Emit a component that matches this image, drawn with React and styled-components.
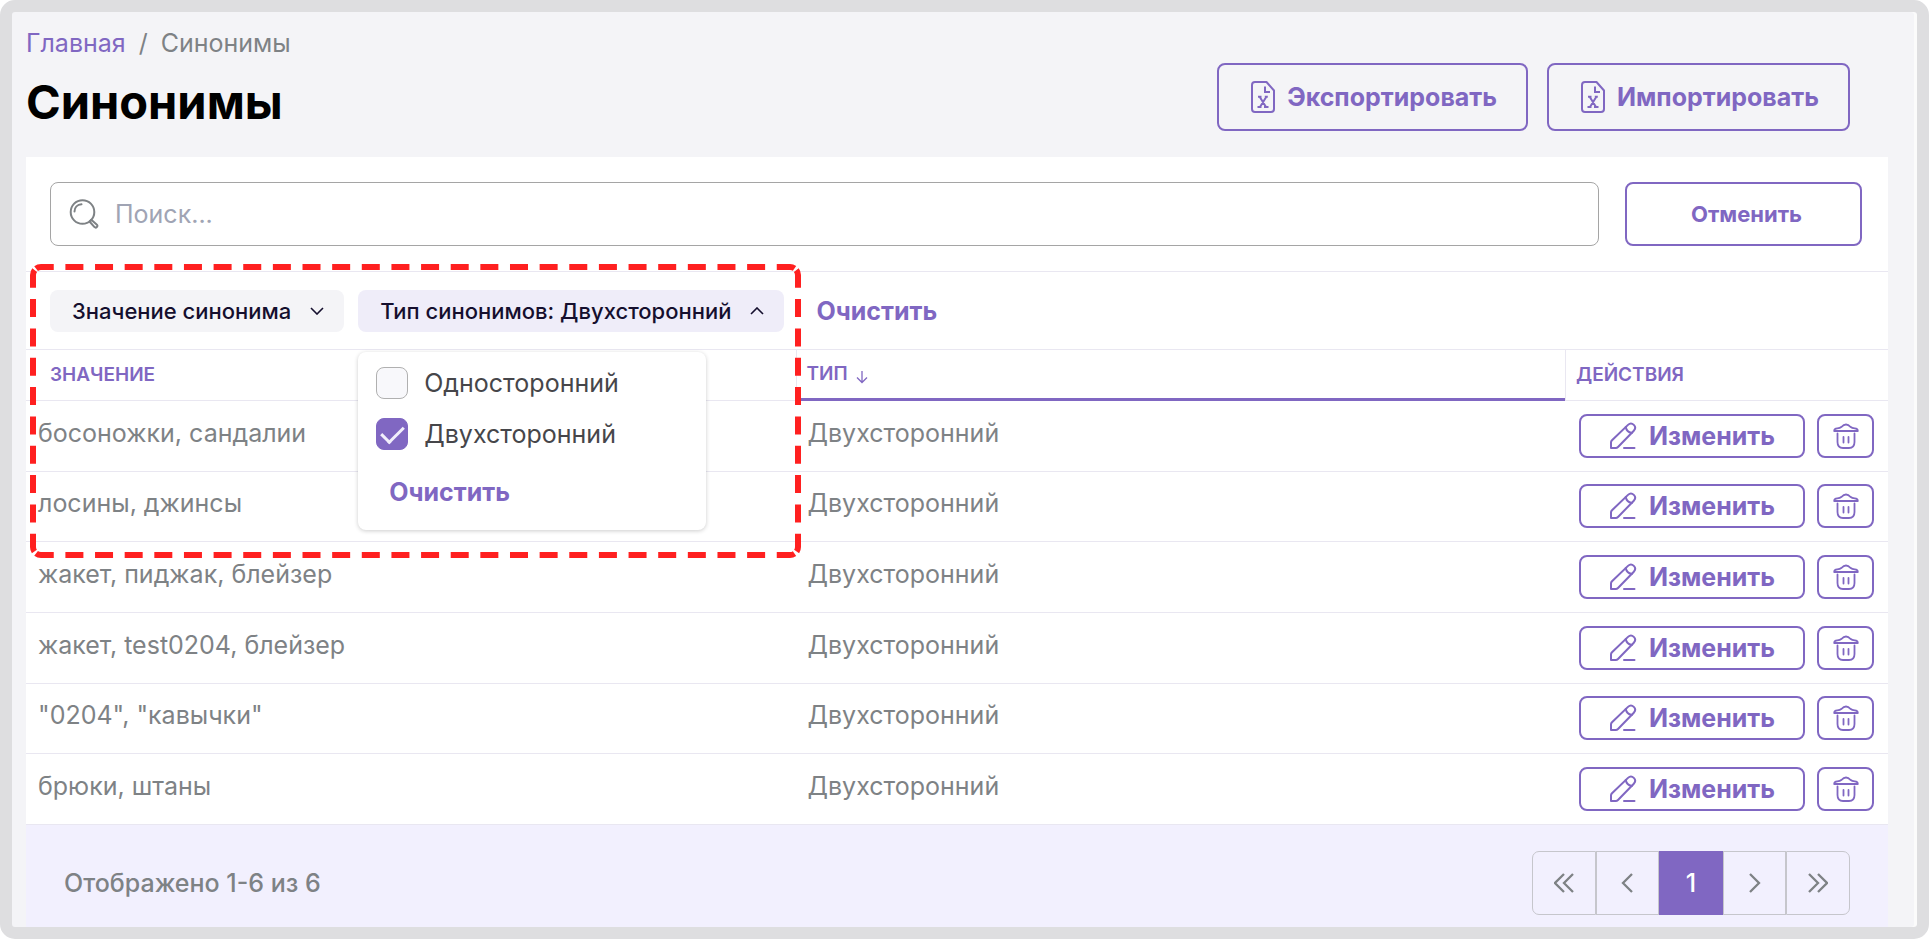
import React, { useState } from 'react';
import styled, { createGlobalStyle } from 'styled-components';

const purple = '#8067c2';
const line = '#e9e7f1';

const rows = [
  'босоножки, сандалии',
  'лосины, джинсы',
  'жакет, пиджак, блейзер',
  'жакет, test0204, блейзер',
  '"0204", "кавычки"',
  'брюки, штаны',
];

const ExcelIcon = () => (
  <svg width="24" height="32" viewBox="0 0 24 32" fill="none" stroke="currentColor" strokeWidth="2">
    <path d="M15.500 1H4a3 3 0 0 0-3 3v24a3 3 0 0 0 3 3h16a3 3 0 0 0 3-3V9.500z" strokeLinejoin="round" />
    <path d="M14 5.500V11h5" />
    <path d="M8.500 15.500l6.500 10.500M15.500 15.500L9 26M7 15.800h3.500M13.800 15.800h3M6.500 26h4M13 26h4.500" />
  </svg>
);

const PencilIcon = () => (
  <svg width="28" height="28" viewBox="0 0 28 28" fill="none" stroke="currentColor" strokeWidth="2" strokeLinejoin="round" strokeLinecap="round">
    <path d="M2 26v-5.500c0-1 .4-1.600 1-2.200L19 2.900c1.800-1.700 4.200-1.600 5.800 0s1.700 4 0 5.800L9 25c-.6.600-1.300 1-2.200 1z" />
    <path d="M16.800 5c.5 3.300 2.400 5.300 6 6M15 26h10.500" />
  </svg>
);

const TrashIcon = () => (
  <svg width="26" height="26" viewBox="0 0 26 26" fill="none" stroke="currentColor" strokeWidth="1.800" strokeLinejoin="round" strokeLinecap="round">
    <path d="M1.200 8c0-1.900 1.400-2.500 3-2.600 2-.1 3.300-.6 4.500-1.600C9.900 2.300 11 1.500 13 1.500s3.100.8 4.300 2.300c1.200 1 2.500 1.500 4.500 1.600 1.600.1 3 .7 3 2.600z" />
    <path d="M4.500 10.500V19c0 4 2 6 5.500 6h6c3.500 0 5.500-2 5.500-6v-8.500M10.500 14v5.500M15.500 14v5.500" />
  </svg>
);

const SearchIcon = () => (
  <svg width="30" height="30" viewBox="0 0 30 30" fill="none" stroke="currentColor" strokeWidth="2" strokeLinecap="round">
    <circle cx="13.500" cy="13" r="11.800" />
    <path d="M5.500 12.500c0-4 3-6.800 7-7.200" />
    <path d="M20.500 22.500l1.800-1.800 5.600 5a1.700 1.700 0 0 1-2.400 2.400z" strokeLinejoin="round" />
  </svg>
);

const Chevron = ({ up }) => (
  <svg width="14" height="8" viewBox="0 0 14 8" fill="none" stroke="currentColor" strokeWidth="1.600">
    <path d={up ? 'M1 7l6-6 6 6' : 'M1 1l6 6 6-6'} />
  </svg>
);

const SortIcon = () => (
  <svg width="12" height="14" viewBox="0 0 12 14" fill="none" stroke="currentColor" strokeWidth="1.300">
    <path d="M6 1v11.500M1 7.500l5 5 5-5" />
  </svg>
);

const PageIcon = ({ d, width = 12 }) => (
  <svg width={width} height="20" viewBox={`0 0 ${width} 20`} fill="none" stroke="currentColor" strokeWidth="2.300">
    <path d={d} />
  </svg>
);

const App = () => {
  const [search, setSearch] = useState('');
  const [types, setTypes] = useState({ one: false, two: true });

  const toggle = (key) => setTypes({ ...types, [key]: !types[key] });
  const clear = () => setTypes({ one: false, two: false });

  return (
    <Frame>
      <GlobalStyle />
      <Header>
        <div>
          <Breadcrumbs>
            <a href="#main">Главная</a>
            <span>/</span>
            <span>Синонимы</span>
          </Breadcrumbs>
          <Title>Синонимы</Title>
        </div>
        <HeaderActions>
          <HeaderButton type="button"><ExcelIcon />Экспортировать</HeaderButton>
          <HeaderButton type="button"><ExcelIcon />Импортировать</HeaderButton>
        </HeaderActions>
      </Header>

      <Panel>
        <SearchRow>
          <SearchBox>
            <SearchIcon />
            <input aria-label="Поиск" placeholder="Поиск..." value={search} onChange={(e) => setSearch(e.target.value)} />
          </SearchBox>
          <CancelButton type="button" onClick={() => setSearch('')}>Отменить</CancelButton>
        </SearchRow>

        <Filters>
          <Chip type="button">Значение синонима<Chevron /></Chip>
          <FilterWrap>
            <Chip type="button" $active>Тип синонимов: Двухсторонний<Chevron up /></Chip>
            <Dropdown>
              <Option>
                <Checkbox type="checkbox" checked={types.one} onChange={() => toggle('one')} />
                Односторонний
              </Option>
              <Option>
                <Checkbox type="checkbox" checked={types.two} onChange={() => toggle('two')} />
                Двухсторонний
              </Option>
              <ClearButton type="button" onClick={clear}>Очистить</ClearButton>
            </Dropdown>
          </FilterWrap>
          <ClearButton type="button" onClick={clear}>Очистить</ClearButton>
          <Highlight width="771" height="294" viewBox="0 0 771 294" aria-hidden="true">
            <path d="M5.340 5.340A8 8 0 0 1 11 3H760A8 8 0 0 1 765.660 5.340" strokeDasharray="18 11.640" />
            <path d="M5.340 288.660A8 8 0 0 0 11 291H760A8 8 0 0 0 765.660 288.660" strokeDasharray="18 11.640" />
            <path d="M5.340 5.340A8 8 0 0 0 3 11V283A8 8 0 0 0 5.340 288.660" strokeDasharray="18 11.330" />
            <path d="M765.660 5.340A8 8 0 0 1 768 11V283A8 8 0 0 1 765.660 288.660" strokeDasharray="18 11.330" />
          </Highlight>
        </Filters>

        <Table>
          <colgroup>
            <col />
            <col />
            <ActionsCol />
          </colgroup>
          <thead>
            <tr>
              <Th $first>Значение</Th>
              <Th $sorted>Тип <SortIcon /></Th>
              <Th>Действия</Th>
            </tr>
          </thead>
          <tbody>
            {rows.map((row) => (
              <tr key={row}>
                <Td>{row}</Td>
                <Td>Двухсторонний</Td>
                <ActionsTd>
                  <Actions>
                    <EditButton type="button"><PencilIcon />Изменить</EditButton>
                    <DeleteButton type="button" aria-label="Удалить"><TrashIcon /></DeleteButton>
                  </Actions>
                </ActionsTd>
              </tr>
            ))}
          </tbody>
        </Table>

        <Footer>
          <span>Отображено 1-6 из 6</span>
          <Pagination aria-label="Страницы">
            <PageButton type="button" aria-label="Первая"><PageIcon width={20} d="M10 1l-9 9 9 9M19 1l-9 9 9 9" /></PageButton>
            <PageButton type="button" aria-label="Назад"><PageIcon d="M11 1l-9 9 9 9" /></PageButton>
            <PageButton type="button" $current>1</PageButton>
            <PageButton type="button" aria-label="Вперёд"><PageIcon d="M1 1l9 9-9 9" /></PageButton>
            <PageButton type="button" aria-label="Последняя"><PageIcon width={20} d="M1 1l9 9-9 9M10 1l9 9-9 9" /></PageButton>
          </Pagination>
        </Footer>
      </Panel>
    </Frame>
  );
};

export default App;

const GlobalStyle = createGlobalStyle`
  * {
    box-sizing: border-box;
  }
  body {
    margin: 0;
    background: #fff;
    font-family: Inter, 'Noto Sans', sans-serif;
    font-size: 25px;
    line-height: 30px;
    color: #7e8285;
  }
  button, input {
    font-family: inherit;
  }
  button {
    cursor: pointer;
    padding: 0;
  }
  svg {
    flex-shrink: 0;
  }
`

const Frame = styled.div`
  display: flex;
  flex-direction: column;
  min-height: 100vh;
  padding: 0 29px 0 14px;
  border: 12px solid #dedee0;
  border-radius: 15px;
  background: #f4f4f7;
  box-shadow: inset -3px 0 #fbfbfb;
`

const Header = styled.header`
  display: flex;
  justify-content: space-between;
  align-items: flex-end;
  padding: 16px 38px 26px 0;
`

const Breadcrumbs = styled.nav`
  display: flex;
  gap: 13px;

  a {
    color: ${purple};
    text-decoration: none;
  }
`

const Title = styled.h1`
  margin: 15px 0 0;
  font-size: 47px;
  line-height: 58px;
  font-weight: 700;
  color: #000;
`

const HeaderActions = styled.div`
  display: flex;
  gap: 19px;
`

const OutlineButton = styled.button`
  display: flex;
  align-items: center;
  justify-content: center;
  border: 2px solid ${purple};
  border-radius: 8px;
  background: transparent;
  color: ${purple};
  font-size: 25px;
  font-weight: 700;
`

const HeaderButton = styled(OutlineButton)`
  gap: 12px;
  height: 68px;
  padding: 0 29px 0 32px;
`

const Panel = styled.main`
  display: flex;
  flex-direction: column;
  flex: 1;
  background: #fff;
`

const SearchRow = styled.div`
  display: flex;
  gap: 26px;
  padding: 25px 26px 25px 24px;
  border-bottom: 1px solid ${line};
`

const SearchBox = styled.label`
  display: flex;
  flex: 1;
  align-items: center;
  gap: 16px;
  height: 64px;
  padding: 0 18px;
  border: 1px solid #a5a5a5;
  border-radius: 8px;

  input {
    flex: 1;
    padding: 0;
    border: 0;
    outline: 0;
    background: none;
    font-size: 25px;
    color: #7e8285;
  }
  input::placeholder {
    color: #a0a4b4;
  }
`

const CancelButton = styled(OutlineButton)`
  width: 237px;
  height: 64px;
  padding-left: 6px;
  font-size: 22px;
`

const Filters = styled.div`
  position: relative;
  display: flex;
  align-items: center;
  gap: 14px;
  height: 78px;
  padding: 0 24px;
  border-bottom: 1px solid ${line};
`

const FilterWrap = styled.div`
  position: relative;
`

const Chip = styled.button`
  display: flex;
  align-items: center;
  gap: 19px;
  height: 42px;
  padding: 0 20px 0 22px;
  border: 0;
  border-radius: 8px;
  background: ${(props) => (props.$active ? '#efedf9' : '#f4f4f7')};
  color: #150f2e;
  font-size: 22px;
  font-weight: 500;
`

const Dropdown = styled.div`
  position: absolute;
  z-index: 1;
  top: 62px;
  left: 0;
  width: 348px;
  height: 178px;
  padding: 6px 18px;
  border-radius: 8px;
  background: #fff;
  box-shadow: 0 1px 4px rgba(0, 0, 0, 0.2);
`

const Option = styled.label`
  display: flex;
  align-items: center;
  gap: 16px;
  height: 51px;
  color: #46464a;
`

const Checkbox = styled.input`
  appearance: none;
  width: 32px;
  height: 32px;
  margin: 0;
  border: 1px solid #b0b0b0;
  border-radius: 8px;
  background: #f8f8fb;

  &:checked {
    border-color: ${purple};
    background: ${purple};
  }
  &:checked::after {
    content: '';
    display: block;
    width: 10px;
    height: 19px;
    margin: 2px auto;
    border: solid #f1eefb;
    border-width: 0 3px 3px 0;
    transform: rotate(45deg);
  }
`

const ClearButton = styled.button`
  margin-left: 18px;
  border: 0;
  background: none;
  color: ${purple};
  font-size: 25px;
  line-height: 30px;
  font-weight: 700;

  ${Option} + & {
    margin: 17px 0 0 13px;
  }
`

const Highlight = styled.svg`
  position: absolute;
  z-index: 2;
  top: -8px;
  left: 4px;
  fill: none;
  stroke: #ff2020;
  stroke-width: 6px;
  stroke-dashoffset: -1px;
  pointer-events: none;
`

const Table = styled.table`
  width: 100%;
  height: 475px;
  table-layout: fixed;
  border-collapse: separate;
  border-spacing: 0;
`

const ActionsCol = styled.col`
  width: 323px;
`

const Th = styled.th`
  height: 51px;
  padding: 0 0 0 ${(props) => (props.$first ? 24 : 10)}px;
  border-bottom: ${(props) => (props.$sorted ? `3px solid ${purple}` : `1px solid ${line}`)};
  border-left: ${(props) => (props.$first ? 0 : `1px solid ${line}`)};
  color: ${purple};
  font-size: 19px;
  line-height: 24px;
  font-weight: 600;
  text-align: left;
  text-transform: uppercase;

  svg {
    margin-left: 4px;
    vertical-align: -4px;
  }
`

const Td = styled.td`
  padding: 0 12px 6px;
  border-bottom: 1px solid ${line};
`

const ActionsTd = styled.td`
  padding: 0 14px;
  border-bottom: 1px solid ${line};
`

const Actions = styled.div`
  display: flex;
  gap: 12px;
`

const EditButton = styled(OutlineButton)`
  flex: 1;
  gap: 12px;
  height: 44px;
`

const DeleteButton = styled(OutlineButton)`
  width: 57px;
  height: 44px;
`

const Footer = styled.footer`
  display: flex;
  flex: 1;
  align-items: flex-start;
  justify-content: space-between;
  padding: 26px 38px 12px;
  background: #f2f0fe;
  font-weight: 500;
  line-height: 64px;
`

const Pagination = styled.nav`
  display: flex;
  width: 318px;
`

const PageButton = styled.button`
  display: flex;
  flex: 1;
  align-items: center;
  justify-content: center;
  height: 64px;
  border: 1px solid ${(props) => (props.$current ? purple : '#c6c6cc')};
  background: ${(props) => (props.$current ? purple : 'transparent')};
  color: ${(props) => (props.$current ? '#fff' : '#7e8285')};
  font-size: 25px;
  font-weight: 500;

  &:first-child {
    border-radius: 7px 0 0 7px;
  }
  &:last-child {
    border-radius: 0 7px 7px 0;
  }
`
